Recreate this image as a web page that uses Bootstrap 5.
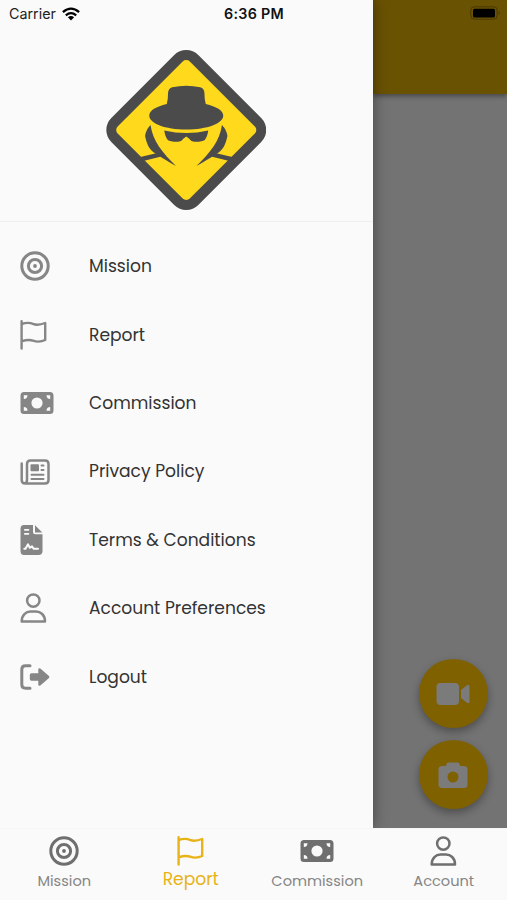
<!DOCTYPE html>
<html lang="en">
<head>
<meta charset="utf-8">
<meta name="viewport" content="width=device-width, initial-scale=1">
<title>Report</title>
<link href="https://cdn.jsdelivr.net/npm/bootstrap@5.3.0/dist/css/bootstrap.min.css" rel="stylesheet">
<style>
body{font-family:Poppins,Inter,"Open Sans",sans-serif;background:#fafafa;color:#2b2b2b}
svg{display:block;flex:none}
.screen{width:507px;height:900px;background:#fafafa}
.main-area{height:828px}
.drawer{width:372.5px;background:#fafafa;box-shadow:0 0 14px rgba(0,0,0,.4);z-index:2}
.status{height:28px;font-family:Inter,sans-serif;font-size:14.3px;line-height:28px;color:#222;z-index:3}
.carrier-row{padding-left:9px}
.carrier-row svg{margin-left:6px}
.clock{font-weight:600;color:#111;left:224px;top:0;letter-spacing:.28px}
.batt{left:470px;top:6px}
.logo-box{height:222px;padding-top:49.5px;border-bottom:1px solid #efefef}
.menu{padding-top:10.3px}
.menu-row{height:68.4px;padding-left:20px;color:#868686}
.icon-cell{width:69px}
.menu-row .lbl{color:#333;font-size:17.1px;white-space:nowrap;padding-top:1px}
.backdrop-area{background:#737373}
.top-strip{height:94px;background:#6a5203;box-shadow:0 2px 5px rgba(0,0,0,.4)}
.fabs{padding:0 19.5px 19.2px 0;gap:12.4px}
.fab{width:68.5px;height:68.5px;background:#806100;color:#7b7b7b;box-shadow:0 4px 8px rgba(0,0,0,.32)}
.tabs{height:72px;background:#fafafa;border-top:1px solid #f6f6f6;color:#6f6f6f;z-index:4;padding-left:1px}
.tab{padding-top:7px;font-size:14.6px;line-height:20px}
.tab .lbl{margin-top:4.5px;color:#868686}
.tab.on,.tab.on .lbl{color:#e8b317}
.tab.on .lbl{font-size:17.1px;margin-top:2.500px}
</style>
</head>
<body>
<svg width="0" height="0" class="position-absolute">
<defs>
<symbol id="target" viewBox="0 0 30 30"><g fill="none" stroke="currentColor"><circle cx="15" cy="15" r="13.2" stroke-width="3"/><circle cx="15" cy="15" r="6.6" stroke-width="3"/></g><circle cx="15" cy="15" r="1.9" fill="currentColor"/></symbol>
<symbol id="flag" viewBox="0 0 27 30"><path d="M1.6 1.3V28.5M1.6 4C6 2.6 9 2.1 13 3.9C17.5 5.8 21 4.6 25.2 3V20C21 22 17.5 22.2 13 20.7C9 19.3 6 19.9 1.6 21.4" fill="none" stroke="currentColor" stroke-width="2.4" stroke-linecap="round" stroke-linejoin="round"/></symbol>
<symbol id="money" viewBox="0 0 34 24"><path fill="currentColor" fill-rule="evenodd" d="M4 1H30Q33.5 1 33.5 4.5V19.5Q33.5 23 30 23H4Q.5 23 .5 19.5V4.500Q.5 1 4 1ZM17 6.400a5.600 5.600 0 1 0 0 11.200a5.600 5.600 0 1 0 0-11.200ZM3.800 4.300V8Q7.500 8 7.500 4.300ZM30.200 4.300H26.500Q26.500 8 30.200 8ZM3.800 19.700H7.500Q7.500 16 3.800 16ZM30.200 19.700V16Q26.500 16 26.500 19.700Z"/></symbol>
<symbol id="news" viewBox="0 0 30 26"><g fill="none" stroke="currentColor" stroke-width="2.500" stroke-linecap="round"><path d="M1.700 4.500V21Q1.700 24.500 5.200 24.500H25Q28.500 24.500 28.500 21V5Q28.500 1.500 25 1.500H10.500Q7 1.500 7 5V21Q7 24.200 4.500 24.500"/><path stroke-width="2" d="M21.500 6.500H23.500M21.500 11H23.500M11.500 15.800H23.500M11.500 20H23.500"/></g><rect x="10.500" y="5.300" width="8.500" height="7" rx="1" fill="currentColor"/></symbol>
<symbol id="contract" viewBox="0 0 23 30"><path fill="currentColor" d="M4 0H13V7Q13 9.300 15.300 9.300H22.500V26Q22.500 30 18.500 30H4Q.5 30 .5 26V4Q.5 0 4 0ZM15 .3L22.300 7.500H15Z"/><g fill="none" stroke="#fafafa" stroke-linecap="round" stroke-linejoin="round"><path stroke-width="1.700" d="M4.800 4.800H8.500M4.800 8.800H8.500"/><path stroke-width="2" d="M4.300 23.800H5.500L8 19.300L9.800 22.800L12 21.300L13.800 23.800H18"/></g></symbol>
<symbol id="user" viewBox="0 0 27 30"><g fill="none" stroke="currentColor" stroke-width="2.500" stroke-linejoin="round"><circle cx="13.300" cy="7.600" r="6.200"/><path d="M1.700 28.400C1.700 21.800 6 18.600 10.500 18.600H16C20.500 18.600 25 21.800 25 28.400Z"/></g></symbol>
<symbol id="logout" viewBox="0 0 30 26"><path d="M10 1.700H5.500Q1.800 1.700 1.800 5.400V20.600Q1.800 24.300 5.500 24.300H10" fill="none" stroke="currentColor" stroke-width="3" stroke-linecap="round"/><path fill="currentColor" d="M11.500 9.200H18.300V5.500Q18.500 3.500 20.300 4.500L29 12.100Q29.800 13 29 13.900L20.300 21.500Q18.500 22.500 18.300 20.500V16.800H11.500Q9.800 16.800 9.800 15V11Q9.800 9.200 11.500 9.200Z"/></symbol>
</defs>
</svg>

<div class="screen position-relative overflow-hidden d-flex flex-column">
  <div class="status position-absolute top-0 start-0 w-100">
    <div class="carrier-row d-flex align-items-center">
      <span>Carrier</span>
      <svg width="18" height="14" viewBox="0 0 18 14"><g fill="none" stroke="#000" stroke-width="2.300"><path d="M.9 5.100Q9-1.800 17.100 5.100"/><path d="M3.800 8.300Q9 4 14.200 8.300"/></g><path d="M5.900 10.300Q9 7.900 12.100 10.300L9 13.500Z"/></svg>
    </div>
    <span class="clock position-absolute">6:36 PM</span>
    <svg class="batt position-absolute" width="32" height="14" viewBox="0 0 32 14"><rect x=".8" y=".8" width="26.400" height="12.400" rx="3.500" fill="none" stroke="#4a3900"/><rect x="3" y="2.700" width="22" height="8.800" rx="1.500"/><path d="M28.700 5Q31 7 28.700 9Z" fill="#4a3900"/></svg>
  </div>

  <div class="main-area d-flex">
    <aside class="drawer position-relative flex-shrink-0">
      <div class="logo-box d-flex justify-content-center">
        <svg width="160" height="160" viewBox="-.25 0 160 160">
          <rect x="18.500" y="18.500" width="123" height="123" rx="17" transform="rotate(45 80 80)" fill="#4b4b4b"/>
          <rect x="29" y="29" width="102" height="102" rx="5" transform="rotate(45 80 80)" fill="#ffd91c"/>
          <g fill="#4b4b4b">
            <path d="M60.500 54Q61.800 50 61.800 43Q62 38.500 66 37.300Q80 34.300 94 37.300Q98 38.500 98.200 43Q98.200 50 99.500 54C110 56.500 117 60.500 117 65.500C117 73.500 101 79.500 80 79.500C59 79.500 43 73.500 43 65.500C43 60.500 50 56.500 60.500 54Z"/>
            <path d="M58 80.500Q80 85.500 102 80.500Q101 87 98.500 90Q96 92 88 91.800Q84.500 91.500 82.700 88.500L80 86.500L77.300 88.500Q75.500 91.500 72 91.800Q64 92 61.500 90Q59 87 58 80.500Z"/>
            <path d="M44.300 75Q39.500 80 38.800 86C40.500 94 43 99 47 102C52 105.500 60 110.500 69.800 116C56 102.500 46.500 91 44.300 75Z"/>
            <path d="M115.700 75Q120.500 80 121.200 86C119.500 94 117 99 113 102C108 105.500 100 110.500 90.200 116C104 102.500 113.500 91 115.700 75Z"/>
            <path d="M51 103L33 107.200L38 110.800L55 106.500ZM109 103L127 107.200L122 110.800L105 106.500Z"/>
          </g>
        </svg>
      </div>
      <nav class="menu">
        <div class="menu-row d-flex align-items-center"><span class="icon-cell"><svg width="30" height="30"><use href="#target"/></svg></span><span class="lbl">Mission</span></div>
        <div class="menu-row d-flex align-items-center"><span class="icon-cell"><svg width="27" height="30"><use href="#flag"/></svg></span><span class="lbl">Report</span></div>
        <div class="menu-row d-flex align-items-center"><span class="icon-cell"><svg width="34" height="24"><use href="#money"/></svg></span><span class="lbl">Commission</span></div>
        <div class="menu-row d-flex align-items-center"><span class="icon-cell"><svg width="30" height="26"><use href="#news"/></svg></span><span class="lbl">Privacy Policy</span></div>
        <div class="menu-row d-flex align-items-center"><span class="icon-cell"><svg width="23" height="30"><use href="#contract"/></svg></span><span class="lbl">Terms &amp; Conditions</span></div>
        <div class="menu-row d-flex align-items-center"><span class="icon-cell"><svg width="27" height="30"><use href="#user"/></svg></span><span class="lbl">Account Preferences</span></div>
        <div class="menu-row d-flex align-items-center"><span class="icon-cell"><svg width="30" height="26"><use href="#logout"/></svg></span><span class="lbl">Logout</span></div>
      </nav>
    </aside>
    <main class="backdrop-area flex-grow-1 d-flex flex-column justify-content-between">
      <header class="top-strip"></header>
      <div class="fabs d-flex flex-column align-items-end">
        <div class="fab rounded-circle d-flex align-items-center justify-content-center"><svg width="34" height="24" viewBox="0 0 34 24" fill="currentColor"><rect x=".5" y="1" width="22.500" height="22" rx="4"/><path d="M25 8L31 3.200Q33.500 2 33.500 4.500V19.500Q33.500 22 31 20.800L25 16Z"/></svg></div>
        <div class="fab rounded-circle d-flex align-items-center justify-content-center"><svg width="30" height="26" viewBox="0 0 30 26"><path fill="currentColor" fill-rule="evenodd" d="M10.500 .5H19.500Q21 .5 21.500 2L22.200 4H26Q29.500 4 29.500 7.500V22.500Q29.500 26 26 26H4Q.5 26 .5 22.500V7.500Q.5 4 4 4H7.800L8.500 2Q9 .5 10.500 .5ZM15 9.500a5.500 5.500 0 1 0 0 11a5.500 5.500 0 1 0 0-11Z"/></svg></div>
      </div>
    </main>
  </div>

  <nav class="tabs position-relative d-flex">
    <div class="tab col-3 d-flex flex-column align-items-center"><svg width="30" height="30"><use href="#target"/></svg><span class="lbl">Mission</span></div>
    <div class="tab on col-3 d-flex flex-column align-items-center"><svg width="27" height="30"><use href="#flag"/></svg><span class="lbl">Report</span></div>
    <div class="tab col-3 d-flex flex-column align-items-center"><svg width="34" height="30" viewBox="0 0 34 30"><use href="#money" y="3" width="34" height="24"/></svg><span class="lbl">Commission</span></div>
    <div class="tab col-3 d-flex flex-column align-items-center"><svg width="27" height="30"><use href="#user"/></svg><span class="lbl">Account</span></div>
  </nav>
</div>
<script src="https://cdn.jsdelivr.net/npm/bootstrap@5.3.0/dist/js/bootstrap.bundle.min.js"></script>
</body>
</html>
